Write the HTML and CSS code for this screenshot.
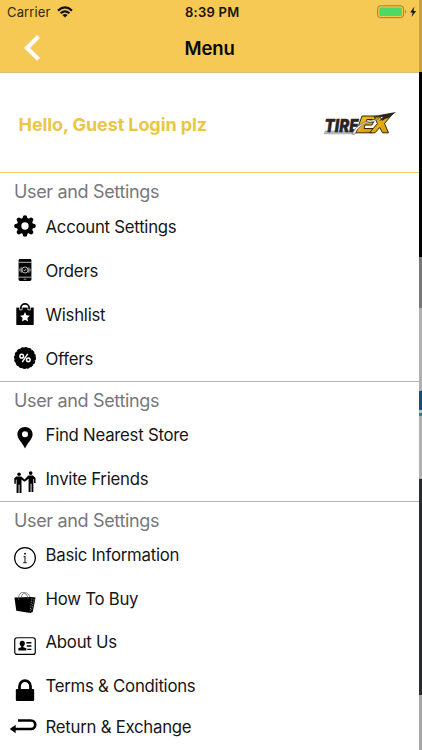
FILE: index.html
```html
<!DOCTYPE html>
<html lang="en">
<head>
<meta charset="utf-8">
<title>Menu</title>
<link rel="stylesheet" href="styles.css">
</head>
<body>
<div class="screen">
  <main class="drawer">
    <header class="top">
      <div class="status">
        <div class="carrier"><span>Carrier</span>
          <svg width="16" height="12" viewBox="0 0 16 12"><g fill="none" stroke="#111" stroke-width="2.1"><path d="M1 4.6Q8-1.7 15 4.6M3.6 7.3Q8 3.5 12.4 7.3"/></g><path d="M8 11.5L5.4 8.9Q8 6.9 10.6 8.9Z" fill="#111"/></svg>
        </div>
        <time class="clock">8:39 PM</time>
        <div class="power">
          <svg width="40" height="14" viewBox="0 0 40 14"><rect x=".6" y=".8" width="26" height="11.8" rx="2.8" fill="none" stroke="#9e7d2e"/><rect x="2.2" y="2.4" width="22.8" height="8.6" rx="1.3" fill="#4cd964"/><path d="M28.2 4.8q2.2 1.9 0 3.8z" fill="#9e7d2e"/><path d="M37.4 1.6L33.2 7.5h2.5l-1.2 4.6 4.6-6h-2.7z" fill="#111"/></svg>
        </div>
      </div>
      <nav class="bar">
        <svg class="back" width="18" height="28" viewBox="0 0 18 28"><path d="M14.500 2.500L3 14l11.500 11.300" fill="none" stroke="#fff" stroke-width="4.200"/></svg>
        <h1>Menu</h1>
      </nav>
    </header>

    <div class="greeting">
      <p>Hello, Guest Login plz</p>
      <svg class="logo" width="76" height="28" viewBox="0 0 76 28">
        <defs><linearGradient id="gold" x1="0" y1="0" x2="1" y2="1"><stop offset="0" stop-color="#f6c51c"/><stop offset="1" stop-color="#cf940a"/></linearGradient></defs>
        <path d="M3 20.500H36L33 24.300H1.500Z" fill="#b5b5b5"/>
        <text class="tire" x="2.500" y="22" textLength="34" lengthAdjust="spacingAndGlyphs">TIRE</text>
        <path d="M40 6H55L53.500 9.500H45L44.200 12H51.500L50 15H43L42 18.500H51L49.500 22.800H34Z" fill="url(#gold)" stroke="#332708" stroke-width="1"/>
        <path d="M52.500 7H58L60.500 10.500 66.500 5 71 3.500 62.500 13.500 66.500 22.800H60.500L57.700 17.500 53 22.800H47.500L55.500 13.500Z" fill="url(#gold)" stroke="#332708" stroke-width="1"/>
        <path d="M30 24Q34 13.500 50 10L57 8.500 52 11.500Q37 13 33 24Z" fill="#eee" stroke="#555" stroke-width=".6"/>
        <path d="M50 6.500L60 4.500 74 2 66 8 57 11 61 7Z" fill="#29251c"/>
      </svg>
    </div>

    <section>
      <h2>User and Settings</h2>
      <ul>
        <li><span class="icon up"><svg viewBox="0 0 24 24"><g stroke="#000" stroke-width="5" stroke-linecap="round"><path d="M12 2.700v18.600M2.700 12h18.600M5.400 5.400l13.200 13.200M18.600 5.400L5.400 18.600"/></g><circle cx="12" cy="12" r="9"/><circle cx="12" cy="12" r="4" fill="#fff"/></svg></span>Account Settings</li>
        <li><span class="icon up"><svg viewBox="0 0 24 24"><rect x="5" y="0" width="14" height="24" rx="1.600"/><path d="M5 3.600h14M5 19.800h14" stroke="#fff" stroke-width=".8"/><path d="M10.500 22h3" stroke="#bbb" stroke-width=".9"/><g fill="none" stroke="#ddd" stroke-width=".9"><circle cx="12" cy="12" r="3.300"/><path d="M10.500 12l1 1 2-2.300M7.800 9v6M16.200 9v6M6.500 10.500v3M17.500 10.500v3"/></g></svg></span>Orders</li>
        <li><span class="icon up"><svg viewBox="0 0 24 24"><path d="M2.500 5h19v19h-19z"/><path d="M7.500 8V5.500a4.500 4.500 0 0 1 9 0V8" fill="none" stroke="#fff" stroke-width="3.300"/><path d="M7.500 7V5.500a4.500 4.500 0 0 1 9 0V7" fill="none" stroke="#000" stroke-width="1.900"/><path d="M12 9.800l1.600 3.500 3.800.5-2.800 2.600.7 3.800-3.300-1.900-3.300 1.900.7-3.800-2.800-2.600 3.800-.5z" fill="#fff"/></svg></span>Wishlist</li>
        <li><span class="icon up"><svg viewBox="0 0 24 24"><circle cx="12" cy="12" r="10.800"/><circle cx="12" cy="12" r="10.700" fill="none" stroke="#000" stroke-width="2.600" stroke-linecap="round" stroke-dasharray="1.600 2.602"/><g fill="none" stroke="#fff" stroke-width="1.600"><circle cx="8.400" cy="10" r="2"/><circle cx="15.600" cy="14" r="2"/><path d="M15 7.500l-6 9"/></g></svg></span>Offers</li>
      </ul>
    </section>

    <section>
      <h2>User and Settings</h2>
      <ul>
        <li><span class="icon down"><svg viewBox="0 0 24 24"><path fill-rule="evenodd" d="M12 0C7.300 0 3.700 3.500 3.700 8 3.700 13.500 9.500 17.500 12 23.500 14.500 17.500 20.300 13.500 20.300 8 20.300 3.500 16.700 0 12 0zm0 4.700a3.300 3.300 0 1 1 0 6.600 3.300 3.300 0 0 1 0-6.600z"/></svg></span>Find Nearest Store</li>
        <li><span class="icon down"><svg viewBox="0 0 24 24"><circle cx="5.500" cy="3.500" r="2"/><circle cx="18.200" cy="2.300" r="2"/><path d="M2.500 6H8l3.500 3.300 4-4.300h5.200l2.800 2.500V13h-1.600V9l-.8-.5v14.500h-2v-9h-1v9h-2.200V8.500L12 11.500h-1L8.200 9.200V24H6v-9H5v9H2.800V9l-.8 1v4H.3V8z"/></svg></span>Invite Friends</li>
      </ul>
    </section>

    <section class="info">
      <h2>User and Settings</h2>
      <ul>
        <li><span class="icon down"><svg viewBox="0 0 24 24"><circle cx="12" cy="12" r="11.300" fill="none" stroke="#000" stroke-width="1.300"/><circle cx="12" cy="7.300" r="1"/><path d="M10.500 10.500H12V17M10 17.200h4" fill="none" stroke="#222" stroke-width="1.200"/></svg></span>Basic Information</li>
        <li><span class="icon down"><svg viewBox="0 0 24 24"><path d="M.5 7l18.500-.5 4.500.5-3 15.500L18 24 2.500 21.500z"/><path d="M5 10C4-1 14-1 15.500 9M8 7C9 .5 15 0 17.500 7" fill="none" stroke="#555" stroke-width=".8"/><path d="M19.500 8L17.500 23M21.700 9l-2.500 12" stroke="#fff" stroke-width=".6" stroke-dasharray="1.300 1.300"/></svg></span>How To Buy</li>
        <li><span class="icon down"><svg viewBox="0 0 24 24"><rect x=".8" y="3" width="22.400" height="18.200" rx="2.500" fill="none" stroke="#000" stroke-width="1.300"/><circle cx="9" cy="9.200" r="2.800"/><path d="M7.800 11h2.400v2.300l3.300 1.200V17H4.700v-2.500l3.100-1.200z"/><path d="M13.500 8.500H19M14 12h5M14.500 15.700H19" stroke="#000" stroke-width="1.500"/></svg></span>About Us</li>
        <li><span class="icon down"><svg viewBox="0 0 24 24"><rect x="2" y="10.800" width="20" height="13.200" rx="1.300"/><path d="M6 12V7.800a6 6 0 0 1 12 0V12" fill="none" stroke="#000" stroke-width="3"/></svg></span>Terms &amp; Conditions</li>
        <li class="last"><span class="icon wide"><svg viewBox="0 0 28 16"><path d="M9 2.500h13a4.200 4.200 0 0 1 0 8.500H6" fill="none" stroke="#000" stroke-width="2.700"/><path d="M.7 11l6-4.200v8.400z"/></svg></span>Return &amp; Exchange</li>
      </ul>
    </section>
  </main>
  <aside class="behind"><i class="b-nav"></i><i class="b-hero"></i><i class="b-gray"></i><i class="b-light"></i><i class="b-blue"></i><i class="b-pale"></i><i class="b-teal"></i><i class="b-light2"></i><i class="b-dark"></i><i class="b-foot"></i></aside>
</div>
</body>
</html>
```
FILE: styles.css
```css
* { box-sizing: border-box; margin: 0; padding: 0; }
body { width: 422px; height: 750px; overflow: hidden; background: #fff; font-family: Inter, "Liberation Sans", sans-serif; color: #161616; }
svg { display: block; }
.screen { display: grid; grid-template-columns: 419.4px 1fr; height: 750px; }
.drawer { height: 750px; overflow: hidden; background: #fff; }
.top { height: 72.5px; background: #f5c953; border-bottom: 1px solid #d9bf7d; }
.status { display: grid; grid-template-columns: 1fr auto 1fr; height: 24px; padding: 0 2px 0 7px; align-items: center; }
.carrier { display: flex; align-items: center; gap: 6px; font-size: 13px; letter-spacing: .14px; color: #30280f; }
.clock { font-size: 13px; font-weight: 600; letter-spacing: .25px; color: #161205; }
.power { display: flex; justify-content: flex-end; padding-right: .5px; }
.bar { display: grid; grid-template-columns: 60px 1fr 60px; align-items: center; height: 47px; }
.back { margin-left: 24px; }
h1 { text-align: center; font-size: 18.5px; font-weight: 600; letter-spacing: -.1px; color: #080702; }
.greeting { display: flex; justify-content: space-between; height: 100.5px; padding: 5px 21px 0 18.6px; align-items: center; border-bottom: 1.5px solid #ebd36a; }
.greeting p { font-size: 18px; font-weight: 700; letter-spacing: -.1px; color: #ebc645; }
.logo { margin-top: -1px; }
.tire { font: italic 900 17px Inter, sans-serif; fill: #272727; stroke: #272727; stroke-width: .3px; }
section { border-bottom: 1px solid #b5b5b5; }
section:last-child { border: 0; }
h2 { height: 32px; padding: 2px 0 0 14px; line-height: 34px; font-size: 18px; font-weight: 400; letter-spacing: -.34px; color: #77777c; }
section + section h2 { height: 31.5px; line-height: 33px; }
section.info h2 { height: 30.7px; }
.info li { height: 43.85px; }
ul { list-style: none; }
li { display: flex; align-items: center; height: 43.95px; padding-left: 14px; gap: 9.5px; font-size: 16.8px; letter-spacing: -.26px; white-space: nowrap; }
.icon { width: 22px; height: 22px; flex: none; }
.icon svg { width: 100%; height: 100%; }
.up { margin-top: -1px; }
.down { margin-top: 6.5px; }
.info .last { height: 38.5px; padding-left: 9px; gap: 8.5px; }
.wide { width: 28px; height: 16px; margin-top: -2px; }
.behind { display: flex; flex-direction: column; background: #b0b0b0; }
.behind i { display: block; flex: none; }
.b-nav { height: 72px; background: #c69f40; }
.b-hero { height: 185px; background: #000; }
.b-gray { height: 51px; background: #777; }
.b-light { height: 83px; background: #b0b0b0; }
.b-blue { height: 19px; background: #0d4f80; }
.b-pale { height: 3px; background: #b7c2c8; }
.b-teal { height: 3px; background: #28887d; }
.b-light2 { height: 63px; background: #b1b1b1; }
.b-dark { height: 216px; background: #292d2e; }
.b-foot { height: 55px; background: #a5a5a5; }
```
